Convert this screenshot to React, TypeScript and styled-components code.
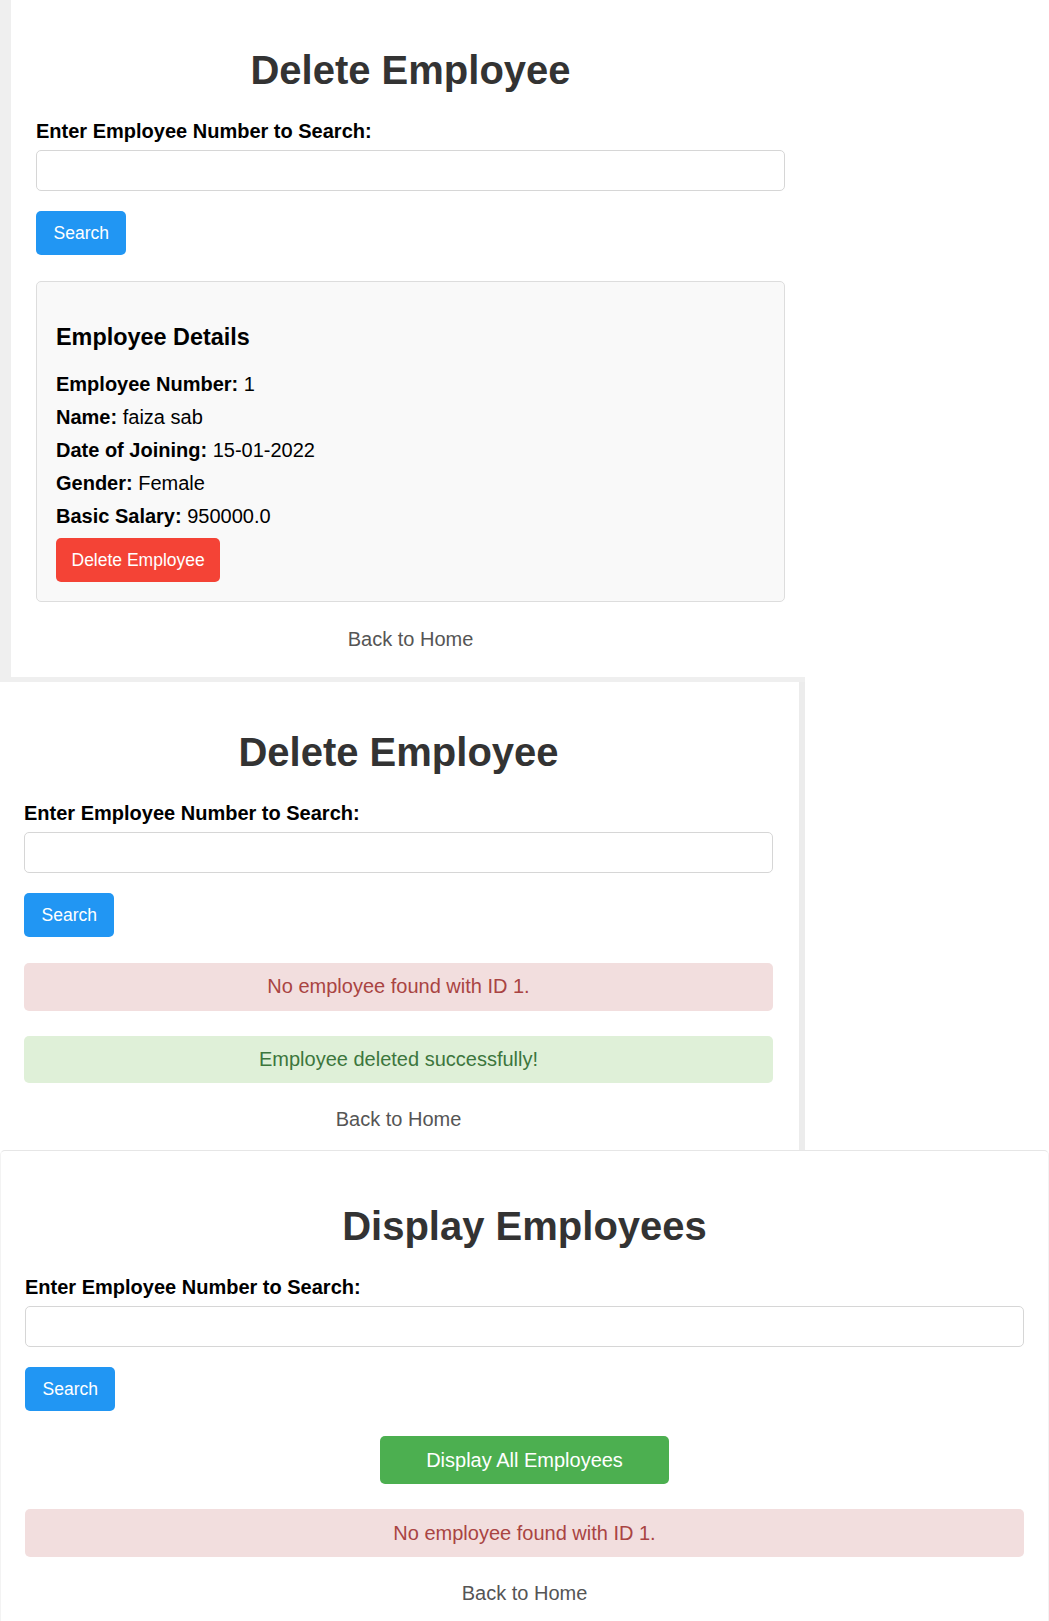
import React from 'react'
import styled, { createGlobalStyle, css } from 'styled-components'

const GlobalStyle = createGlobalStyle`
  body {
    margin: 0;
    background: #ffffff;
    font-family: "Liberation Sans", Arial, sans-serif;
  }
  * {
    box-sizing: border-box;
  }
`

const Page = styled.div`
  display: flex;
  flex-direction: column;
  width: 1049px;
`

// each screenshot sits in its own frame, the grey edges are what is left of the page background
const Frame = styled.div<{ $variant: 'left' | 'right' | 'full' }>`
  display: flex;
  ${({ $variant }) =>
    $variant === 'left' &&
    css`
      width: 805px;
      background: #efefef;
      padding: 0 0 5px 11px;
    `}
  ${({ $variant }) =>
    $variant === 'right' &&
    css`
      width: 805px;
      background: #ececec;
      padding: 0 6px 0 0;
    `}
  ${({ $variant }) =>
    $variant === 'full' &&
    css`
      width: 100%;
    `}
`

const Card = styled.div<{ $padLeft: number; $padTop: number; $height: number; $bordered?: boolean }>`
  flex: 1;
  display: flex;
  flex-direction: column;
  background: #ffffff;
  height: ${({ $height }) => $height}px;
  padding-top: ${({ $padTop }) => $padTop}px;
  padding-left: ${({ $padLeft }) => $padLeft}px;
  ${({ $bordered }) =>
    $bordered &&
    css`
      border: 1px solid #e6e6e6;
      border-left-color: #f3f3f3;
      border-right-color: #f3f3f3;
      border-bottom: none;
      border-radius: 5px 5px 0 0;
      padding-right: 24px;
    `}
`

const Content = styled.div<{ $width?: number }>`
  display: flex;
  flex-direction: column;
  width: ${({ $width }) => ($width ? `${$width}px` : '100%')};
`

const Title = styled.h1`
  margin: 0 0 26.5px;
  font-size: 40px;
  line-height: 46px;
  font-weight: bold;
  color: #333333;
  text-align: center;
`

const Label = styled.label`
  display: block;
  margin-bottom: 7.5px;
  font-size: 20px;
  line-height: 23px;
  font-weight: bold;
  color: #000000;
`

const Input = styled.input`
  width: 100%;
  height: 41px;
  padding: 0 10px;
  border: 1px solid #d6d6d6;
  border-radius: 5px;
  font-size: 20px;
  font-family: inherit;
  background: #ffffff;
`

const colors = {
  blue: '#2196f3',
  red: '#f44336',
  green: '#4caf50',
}

const Button = styled.button<{ $color: keyof typeof colors; $top?: number; $padX?: number }>`
  align-self: flex-start;
  height: 44px;
  margin-top: ${({ $top }) => $top ?? 20}px;
  padding: 0 ${({ $padX }) => $padX ?? 15.5}px;
  border: none;
  border-radius: 5px;
  background: ${({ $color }) => colors[$color]};
  color: #ffffff;
  font-family: inherit;
  font-size: 17.5px;
  cursor: pointer;
`

const WideButton = styled(Button)`
  align-self: center;
  height: 48px;
  padding: 0 46px;
  font-size: 20px;
`

const DetailsBox = styled.div`
  display: flex;
  flex-direction: column;
  margin-top: 26px;
  padding: 19px;
  background: #f9f9f9;
  border: 1px solid #dddddd;
  border-radius: 5px;
`

const DetailsTitle = styled.h3`
  margin: 23px 0 22px;
  font-size: 23.4px;
  line-height: 27px;
  font-weight: bold;
  color: #000000;
`

const DetailLine = styled.p`
  margin: 0 0 10px;
  font-size: 20px;
  line-height: 23px;
  color: #000000;

  strong {
    font-weight: bold;
  }
`

const Alert = styled.div<{ $kind: 'error' | 'success'; $top?: number }>`
  margin-top: ${({ $top }) => $top ?? 25}px;
  padding: 12.3px;
  border-radius: 5px;
  font-size: 20px;
  line-height: 23px;
  text-align: center;
  background: ${({ $kind }) => ($kind === 'error' ? '#f2dede' : '#dff0d8')};
  color: ${({ $kind }) => ($kind === 'error' ? '#a94442' : '#3c763d')};
`

const BackLink = styled.a<{ $top?: number }>`
  display: block;
  margin-top: ${({ $top }) => $top ?? 25}px;
  font-size: 20px;
  line-height: 23px;
  text-align: center;
  color: #555555;
  text-decoration: none;
`

const details = [
  { label: 'Employee Number:', value: '1' },
  { label: 'Name:', value: 'faiza sab' },
  { label: 'Date of Joining:', value: '15-01-2022' },
  { label: 'Gender:', value: 'Female' },
  { label: 'Basic Salary:', value: '950000.0' },
]

const SearchForm = () => (
  <>
    <Label>Enter Employee Number to Search:</Label>
    <Input type="text" />
    <Button $color="blue" $padX={17.5}>
      Search
    </Button>
  </>
)

const App = () => (
  <Page>
    <GlobalStyle />

    <Frame $variant="left">
      <Card $padLeft={25} $padTop={47} $height={677}>
        <Content $width={749}>
          <Title>Delete Employee</Title>
          <SearchForm />
          <DetailsBox>
            <DetailsTitle>Employee Details</DetailsTitle>
            {details.map((d) => (
              <DetailLine key={d.label}>
                <strong>{d.label}</strong> {d.value}
              </DetailLine>
            ))}
            <Button $color="red" $top={0}>
              Delete Employee
            </Button>
          </DetailsBox>
          <BackLink href="#" $top={25.5}>
            Back to Home
          </BackLink>
        </Content>
      </Card>
    </Frame>

    <Frame $variant="right">
      <Card $padLeft={24} $padTop={47} $height={468}>
        <Content $width={749}>
          <Title>Delete Employee</Title>
          <SearchForm />
          <Alert $kind="error" $top={26}>
            No employee found with ID 1.
          </Alert>
          <Alert $kind="success">Employee deleted successfully!</Alert>
          <BackLink href="#">Back to Home</BackLink>
        </Content>
      </Card>
    </Frame>

    <Frame $variant="full">
      <Card $padLeft={24} $padTop={52} $height={471} $bordered>
        <Content>
          <Title>Display Employees</Title>
          <SearchForm />
          <WideButton $color="green" $top={25.3}>
            Display All Employees
          </WideButton>
          <Alert $kind="error">No employee found with ID 1.</Alert>
          <BackLink href="#" $top={25}>
            Back to Home
          </BackLink>
        </Content>
      </Card>
    </Frame>
  </Page>
)

export default App
